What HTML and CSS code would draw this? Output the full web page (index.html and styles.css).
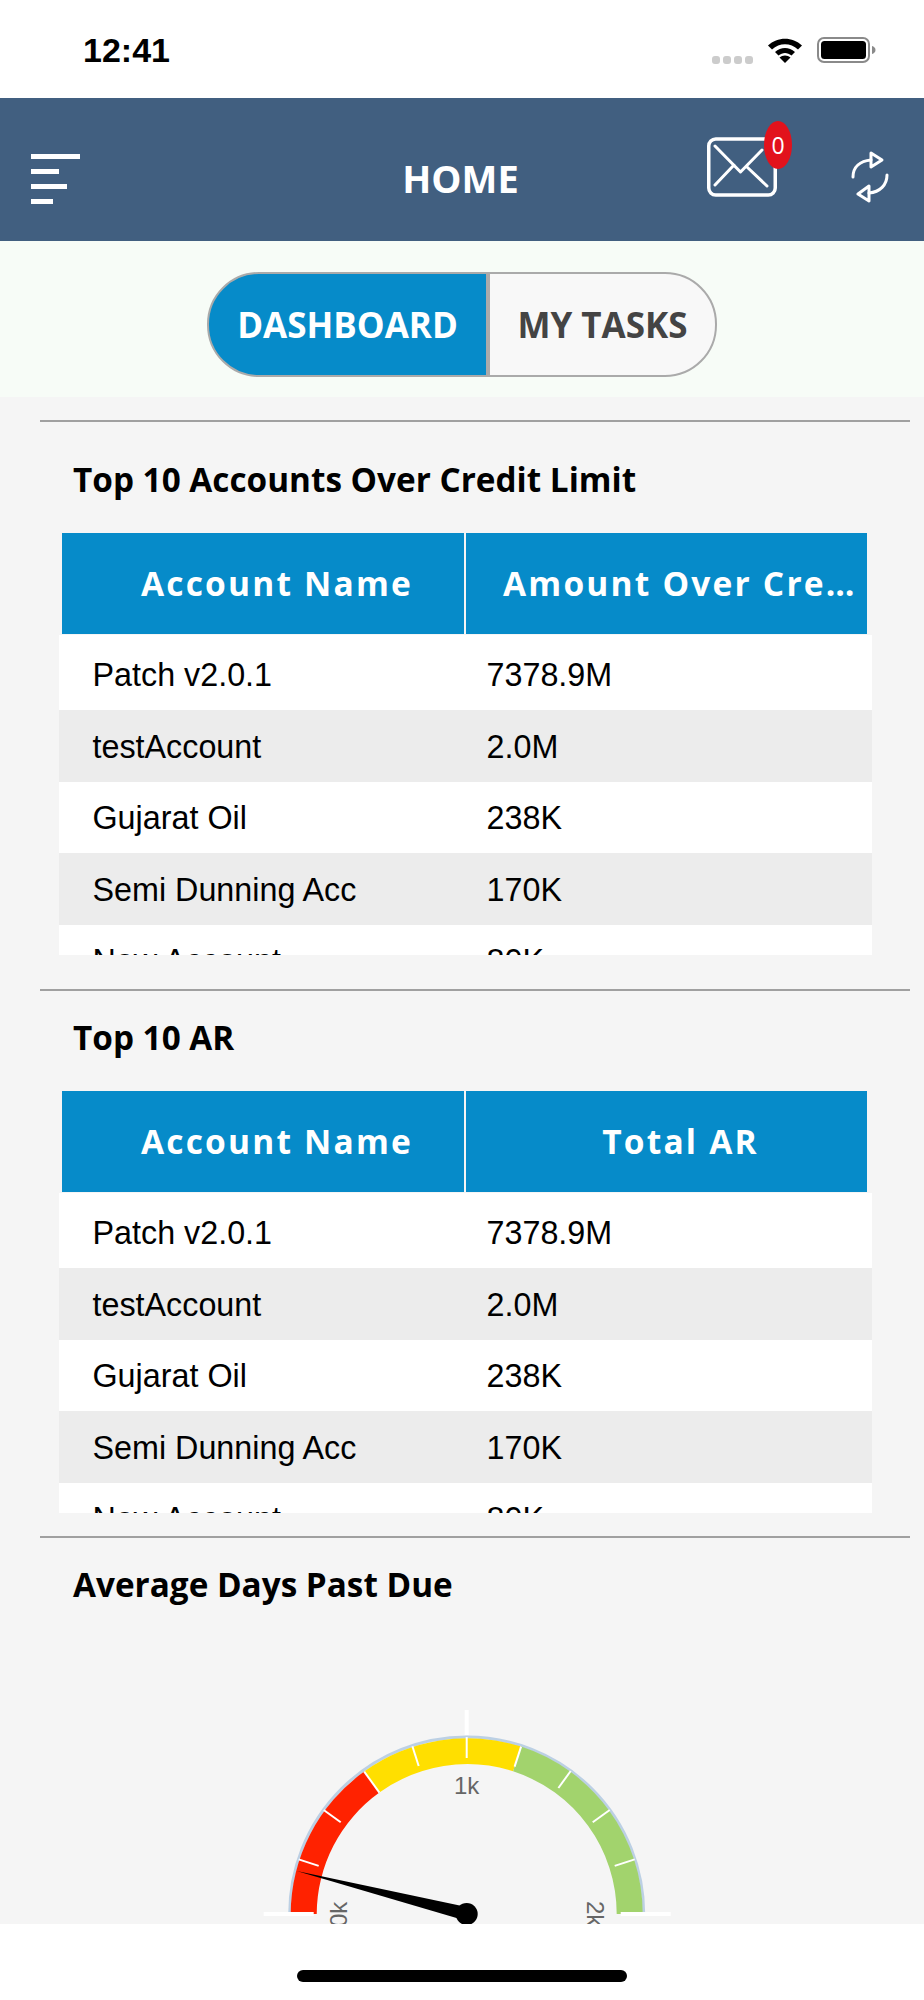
FILE: index.html
```html
<!DOCTYPE html>
<html lang="en">
<head>
    <meta charset="UTF-8">
    <meta name="viewport" content="width=device-width, initial-scale=1.0">
    <title>Home - Dashboard</title>
    <link rel="stylesheet" href="styles.css">
</head>
<body>
    <div class="screen">
        <div class="status-bar">
            <span class="status-time">12:41</span>
            <div class="status-icons">
                <div class="signal-dots"><i></i><i></i><i></i><i></i></div>
                <svg class="wifi-icon" width="36" height="26" viewBox="0 0 36 26">
                    <path d="M1 8.500C10.500 -0.500 25.500 -0.500 35 8.500L31 12.500C23.500 5.500 12.500 5.500 5 12.500Z" fill="#000"/>
                    <path d="M8 15C14 9.500 22 9.500 28 15L24.500 18.500C20.500 15 15.500 15 11.500 18.500Z" fill="#000"/>
                    <path d="M12.500 20.500C15.500 17.800 20.500 17.800 23.500 20.500L18 26Z" fill="#000"/>
                </svg>
                <svg class="battery-icon" width="59" height="26" viewBox="0 0 59 26">
                    <rect x="1" y="1" width="51" height="24" rx="6" fill="none" stroke="#8a8a8a" stroke-width="2"/>
                    <rect x="4" y="4" width="45" height="18" rx="3.500" fill="#000"/>
                    <path d="M55 9C57 9.500 58.500 11 58.500 13C58.500 15 57 16.500 55 17Z" fill="#8a8a8a"/>
                </svg>
            </div>
        </div>

        <header class="app-header">
            <div class="menu-icon"><i class="bar-1"></i><i class="bar-2"></i><i class="bar-3"></i><i class="bar-4"></i></div>
            <h1 class="app-title">HOME</h1>
            <div class="header-actions">
                <div class="mail-icon">
                    <svg width="72" height="62" viewBox="0 0 72 62">
                        <rect x="2.750" y="2" width="66.500" height="56" rx="7" fill="none" stroke="#fff" stroke-width="3.500"/>
                        <path d="M9 9L34.500 35L56 13M9 48L28 28M41 30L61 49" fill="none" stroke="#fff" stroke-width="3" stroke-linecap="round" stroke-linejoin="round"/>
                    </svg>
                    <span class="mail-badge">0</span>
                </div>
                <svg class="refresh-icon" width="40" height="52" viewBox="0 0 40 52">
                    <path d="M3 26C3 16 10 10 21 9" fill="none" stroke="#fff" stroke-width="3" stroke-linecap="round"/>
                    <path d="M21 2L32 9L21 16Z" fill="none" stroke="#fff" stroke-width="3" stroke-linejoin="round"/>
                    <path d="M37 24C37 34 30 41 19 42" fill="none" stroke="#fff" stroke-width="3" stroke-linecap="round"/>
                    <path d="M19 35L8 43L19 50Z" fill="none" stroke="#fff" stroke-width="3" stroke-linejoin="round"/>
                </svg>
            </div>
        </header>

        <div class="tab-band">
            <div class="tab-switch">
                <div class="tab tab-active">DASHBOARD</div>
                <div class="tab">MY TASKS</div>
            </div>
        </div>

        <main class="content">
            <section class="panel">
                <h2 class="panel-title">Top 10 Accounts Over Credit Limit</h2>
                <div class="table-head">
                    <div class="head-cell">Account Name</div>
                    <div class="head-cell">Amount Over Credit Limit</div>
                </div>
                <div class="table-body">
                    <div class="row"><span>Patch v2.0.1</span><span>7378.9M</span></div>
                    <div class="row"><span>testAccount</span><span>2.0M</span></div>
                    <div class="row"><span>Gujarat Oil</span><span>238K</span></div>
                    <div class="row"><span>Semi Dunning Acc</span><span>170K</span></div>
                    <div class="row"><span>New Account</span><span>80K</span></div>
                </div>
            </section>

            <section class="panel">
                <h2 class="panel-title">Top 10 AR</h2>
                <div class="table-head">
                    <div class="head-cell">Account Name</div>
                    <div class="head-cell">Total AR</div>
                </div>
                <div class="table-body">
                    <div class="row"><span>Patch v2.0.1</span><span>7378.9M</span></div>
                    <div class="row"><span>testAccount</span><span>2.0M</span></div>
                    <div class="row"><span>Gujarat Oil</span><span>238K</span></div>
                    <div class="row"><span>Semi Dunning Acc</span><span>170K</span></div>
                    <div class="row"><span>New Account</span><span>80K</span></div>
                </div>
            </section>

            <section class="panel">
                <h2 class="panel-title">Average Days Past Due</h2>
                <svg class="gauge" width="924" height="320" viewBox="-0.700 0 924 320">
                    <!-- center 466,281 outer r 177 inner r 150 -->
                    <path d="M289 281A177 177 0 0 1 643 281" fill="none" stroke="#bcd0e4" stroke-width="3"/>
                    <path d="M290 281A176 176 0 0 1 363.500 138.600L378.700 159.600A150 150 0 0 0 316 281Z" fill="#ff2200"/>
                    <path d="M363.500 138.600A176 176 0 0 1 520.400 113.600L512.400 138.300A150 150 0 0 0 378.700 159.600Z" fill="#ffdf00"/>
                    <path d="M520.400 113.600A176 176 0 0 1 642 281L616 281A150 150 0 0 0 512.400 138.300Z" fill="#a2d36d"/>
                    <g stroke="#fff" stroke-width="2">
                        <path d="M298 226.400L318 232.900"/>
                        <path d="M323 177L340 189.300"/>
                        <path d="M363.500 138.600L378.700 159.600"/>
                        <path d="M411.700 113.200L418 133"/>
                        <path d="M466 104L466 125"/>
                        <path d="M520.400 113.600L513.900 133.600"/>
                        <path d="M570 138L557.700 155"/>
                        <path d="M609 177L592 189.300"/>
                        <path d="M634 226.400L614 232.900"/>
                    </g>
                    <g stroke="#fff" stroke-width="4">
                        <path d="M466 77L466 102"/>
                        <path d="M263 281L313 281"/>
                        <path d="M620 281L670 281"/>
                    </g>
                    <text class="gauge-label" x="466" y="161" text-anchor="middle">1k</text>
                    <text class="gauge-label" transform="translate(346 294) rotate(-90)">0k</text>
                    <text class="gauge-label" transform="translate(586 268) rotate(90)">2k</text>
                    <path d="M296 238L466 274L466 288Z" fill="#000"/>
                    <circle cx="466" cy="281" r="11" fill="#000"/>
                </svg>
            </section>
        </main>

        <div class="home-bar"><div class="home-indicator"></div></div>
    </div>
</body>
</html>
```

FILE: styles.css
```css
* {
    margin: 0;
    padding: 0;
    box-sizing: border-box;
}

body {
    background-color: #fff;
    font-family: 'Open Sans', sans-serif;
}

.screen {
    display: flex;
    flex-direction: column;
    width: 924px;
    height: 2000px;
    overflow: hidden;
}

.status-bar {
    display: flex;
    justify-content: space-between;
    align-items: flex-start;
    flex: none;
    height: 98px;
    padding: 30px 48px 0 83px;
    background-color: #fff;
}

.status-time {
    font-family: 'Liberation Sans', sans-serif;
    font-size: 34px;
    font-weight: 700;
    line-height: 40px;
    color: #000;
}

.status-icons {
    display: flex;
    align-items: flex-start;
    padding-top: 7px;
}

.signal-dots {
    display: flex;
    gap: 3px;
    margin: 19px 14px 0 0;
}

.signal-dots i {
    display: block;
    width: 8px;
    height: 8px;
    border-radius: 3px;
    background-color: #ccc;
}

.wifi-icon {
    margin-right: 14px;
}

.app-header {
    display: grid;
    grid-template-columns: 1fr auto 1fr;
    align-items: center;
    flex: none;
    height: 143px;
    padding: 16px 34px 0 31px;
    background-color: #415f80;
}

.menu-icon {
    display: flex;
    flex-direction: column;
    gap: 10px;
    margin-top: 2px;
}

.menu-icon i {
    display: block;
    height: 5px;
    background-color: #fff;
}

.bar-1 { width: 49px; }
.bar-2 { width: 28px; }
.bar-3 { width: 36px; }
.bar-4 { width: 22px; }

.app-title {
    font-size: 38px;
    font-weight: 700;
    color: #fff;
}

.header-actions {
    display: flex;
    justify-content: flex-end;
    align-items: center;
    gap: 72px;
}

.mail-icon {
    position: relative;
    width: 72px;
    height: 62px;
    margin-top: -20px;
}

.mail-icon svg {
    display: block;
}

.mail-badge {
    position: absolute;
    top: -16px;
    left: 58px;
    width: 28px;
    height: 48px;
    border-radius: 50%;
    background-color: #e2121c;
    color: #fff;
    font-size: 23px;
    line-height: 48px;
    text-align: center;
}

.refresh-icon {
    margin-top: -1px;
}

.tab-band {
    display: flex;
    justify-content: center;
    align-items: center;
    flex: none;
    height: 156px;
    padding-top: 10px;
    background-color: #f7fcf7;
}

.tab-switch {
    display: flex;
    height: 105px;
}

.tab {
    display: flex;
    justify-content: center;
    align-items: center;
    width: 229px;
    border: 2px solid #aaa;
    border-radius: 0 52px 52px 0;
    background-color: #f8f8f8;
    color: #444;
    font-size: 35px;
    font-weight: 700;
}

.tab-active {
    width: 281px;
    border-radius: 52px 0 0 52px;
    background-color: #068bc9;
    color: #fff;
}

.content {
    flex: 1;
    overflow: hidden;
    background-color: #f5f5f5;
}

.panel {
    margin: 0 14px 0 40px;
    padding-bottom: 23px;
    border-top: 2px solid #a0a0a0;
}

.panel:first-child {
    margin-top: 23px;
    padding-bottom: 34px;
}

.panel-title {
    margin: 24px 0 0 33px;
    font-size: 33.300px;
    font-weight: 700;
    line-height: 44px;
    color: #000;
}

.panel:first-child .panel-title {
    margin-top: 35px;
}

.table-head {
    display: grid;
    grid-template-columns: 402px 401px;
    column-gap: 2px;
    width: 805px;
    height: 101px;
    margin: 32px 0 0 22px;
}

.head-cell {
    padding: 0 9px 0 37px;
    overflow: hidden;
    background-color: #068bc9;
    color: #fff;
    font-size: 33.500px;
    font-weight: 700;
    line-height: 101px;
    letter-spacing: 2.200px;
    text-align: center;
    text-overflow: ellipsis;
    white-space: nowrap;
}

.table-body {
    width: 813px;
    height: 320px;
    margin: 1px 0 0 19px;
    overflow: hidden;
    background-color: #fff;
    font-family: 'Liberation Sans', sans-serif;
    font-size: 32.300px;
    color: #000;
}

.row {
    display: grid;
    grid-template-columns: 394px 1fr;
    align-items: center;
    height: 71.500px;
    padding: 3px 0 0 33.500px;
}

.row:first-child {
    height: 75px;
    padding-top: 5px;
}

.row:nth-child(even) {
    background-color: #ececec;
}

.gauge {
    display: block;
    margin: 27px 0 0 -40px;
}

.gauge-label {
    font-family: 'Liberation Sans', sans-serif;
    font-size: 24px;
    fill: #666;
}

.home-bar {
    display: flex;
    justify-content: center;
    flex: none;
    height: 76px;
    padding-top: 46px;
    background-color: #fff;
}

.home-indicator {
    width: 330px;
    height: 12px;
    border-radius: 6px;
    background-color: #000;
}
```
